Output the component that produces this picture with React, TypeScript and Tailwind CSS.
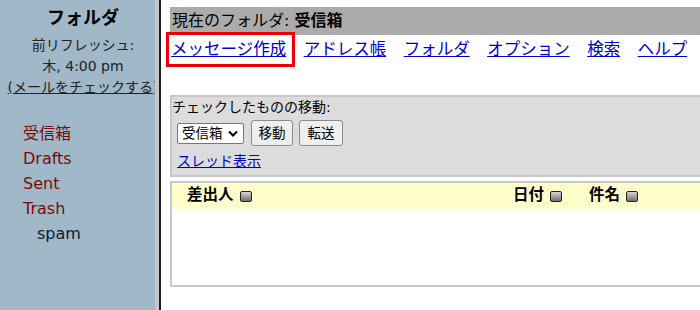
import React from 'react';

const SortIcon: React.FC = () => (
  <span className="ml-[6px] inline-block h-[11px] w-[12px] rounded-[2px] border border-[#222] bg-gradient-to-b from-[#d8d8d8] to-[#707070] align-middle" />
);

const navLinks = ['メッセージ作成', 'アドレス帳', 'フォルダ', 'オプション', '検索', 'ヘルプ'];

const folders = [
  { name: '受信箱', special: true },
  { name: 'Drafts', special: true },
  { name: 'Sent', special: true },
  { name: 'Trash', special: true },
  { name: 'spam', special: false },
];

const App: React.FC = () => {
  return (
    <div className="flex h-[310px] w-[700px] overflow-hidden bg-white font-['DejaVu_Sans','Noto_Sans_CJK_JP',sans-serif] text-black">
      {/* Left frame */}
      <aside className="shrink-0 border-r-2 border-[#1e1e1e]">
        <div className="h-full w-[159px] overflow-hidden border-r-4 border-[#c8c8c8] bg-[#a0b8c8]">
          <div className="w-[166px] pt-[6px] text-center">
            <div className="text-[18px] font-bold leading-[24px]">フォルダ</div>
            <div className="mt-[5px] text-[14px] leading-[21px] text-[#222]">
              <div>前リフレッシュ:</div>
              <div>木, 4:00 pm</div>
              <div className="whitespace-nowrap">
                <a href="#" className="underline">(メールをチェックする)</a>
              </div>
            </div>
          </div>
          <ul className="mt-[23px] pl-[23px] text-[16px] leading-[25px]">
            {folders.map((f) => (
              <li
                key={f.name}
                className={f.special ? 'text-[#7a0a0a]' : 'pl-[14px] text-[#0e1a30]'}
              >
                {f.name}
              </li>
            ))}
          </ul>
        </div>
      </aside>

      {/* Right frame */}
      <main className="relative flex-1 overflow-hidden pl-[9px] pt-[7px]">
        <div className="w-[620px]">
          <div className="h-[28px] bg-[#ababab] pl-[2px] text-[16px] leading-[28px]">
            現在のフォルダ: <span className="font-bold">受信箱</span>
          </div>

          <nav className="flex h-[30px] items-center gap-[17.5px] pl-[1px] text-[16.5px]">
            {navLinks.map((l) => (
              <a key={l} href="#" className="text-[#0000cc] underline">
                {l}
              </a>
            ))}
          </nav>

          {/* Move checked */}
          <div className="mt-[30px] border-2 border-[#c8c8c8] bg-[#dcdcdc] text-[14px]">
            <div className="leading-[21px]">チェックしたものの移動:</div>
            <div className="flex h-[30px] items-center pl-[5px]">
              <div className="flex h-[21px] w-[67px] items-center justify-between rounded-[2px] border border-[#767676] bg-white pl-[4px] pr-[5px] text-[13.5px]">
                <span>受信箱</span>
                <svg width="10" height="7" viewBox="0 0 10 7">
                  <path d="M1 1.5 L5 5.5 L9 1.5" fill="none" stroke="#000" strokeWidth="2" />
                </svg>
              </div>
              <button className="ml-[7px] h-[26px] w-[42px] rounded-[3px] border border-[#8a8a8a] bg-[#efefef] text-[13.5px]">
                移動
              </button>
              <button className="ml-[6px] h-[26px] w-[44px] rounded-[3px] border border-[#8a8a8a] bg-[#efefef] text-[13.5px]">
                転送
              </button>
            </div>
            <div className="pb-[3px] pl-[5px] pt-[3px] leading-[21px]">
              <a href="#" className="text-[#0000cc] underline">スレッド表示</a>
            </div>
          </div>

          {/* Message list */}
          <div className="mt-[4px] h-[106px] border-2 border-[#c8c8c8]">
            <div className="flex h-[26px] items-center bg-[#ffffcc] pl-[15px] text-[15.5px] font-bold">
              <div className="flex w-[326px] items-center">
                差出人
                <SortIcon />
              </div>
              <div className="flex w-[76px] items-center">
                日付
                <SortIcon />
              </div>
              <div className="flex items-center">
                件名
                <SortIcon />
              </div>
            </div>
          </div>
        </div>

        {/* highlight annotation */}
        <div className="pointer-events-none absolute left-[5px] top-[32px] h-[35px] w-[129px] border-[3px] border-[#ee0000]" />
      </main>
    </div>
  );
};

export default App;
